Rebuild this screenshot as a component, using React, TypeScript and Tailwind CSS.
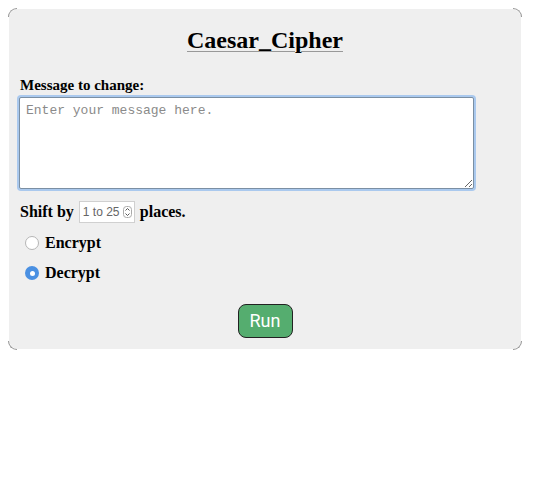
import React, { useState } from 'react';

const serif = { fontFamily: '"Liberation Serif", "Times New Roman", serif' };

function CornerMarks() {
  return (
    <>
      <span className="absolute -left-[1px] -top-[1px] h-[9px] w-[9px] rounded-tl-[9px] border-l border-t border-[#666] opacity-70" />
      <span className="absolute -right-[1px] -top-[1px] h-[9px] w-[9px] rounded-tr-[9px] border-r border-t border-[#666] opacity-70" />
      <span className="absolute -bottom-[1px] -left-[1px] h-[9px] w-[9px] rounded-bl-[9px] border-b border-l border-[#666] opacity-70" />
      <span className="absolute -bottom-[1px] -right-[1px] h-[9px] w-[9px] rounded-br-[9px] border-b border-r border-[#666] opacity-70" />
    </>
  );
}

export default function App() {
  const [mode, setMode] = useState('decrypt');
  const [msg, setMsg] = useState('');
  const [shift, setShift] = useState('');

  return (
    <div className="min-h-[490px] bg-white pl-[9px] pt-[9px]">
      <div className="relative w-[512px] rounded-[9px] bg-[#efefef] px-[11px] pb-[11px] pt-[15px]" style={serif}>
        <CornerMarks />
        <h1 className="text-center text-[24px] font-bold leading-[32px] text-black underline decoration-[#999] decoration-1 underline-offset-[3px]">
          Caesar_Cipher
        </h1>

        <label className="mt-[20px] block text-[15px] font-bold leading-[18px] text-black">Message to change:</label>
        <textarea
          value={msg}
          onChange={(e) => setMsg(e.target.value)}
          placeholder="Enter your message here."
          className="mt-[3px] ml-[-1px] block h-[92px] w-[455px] rounded-[2px] border border-[#7b8fa3] bg-white px-[6px] py-[5px] text-[13px] leading-[16px] text-black shadow-[0_0_0_2px_#aac9ee] outline-none placeholder:text-[#8a8a8a]"
          style={{ fontFamily: '"Liberation Mono", "Courier New", monospace' }}
        />

        <div className="mt-[12px] flex items-center text-[16px] font-bold leading-[22px] text-black">
          <span>Shift by</span>
          <div className="relative mx-[5px]">
            <input
              value={shift}
              onChange={(e) => setShift(e.target.value)}
              placeholder="1 to 25"
              className="block h-[22px] w-[56px] border border-[#d0d0d0] bg-white pl-[3px] pr-[14px] text-[12px] font-normal text-black outline-none placeholder:text-[#666]"
              style={{ fontFamily: '"Liberation Sans", Arial, sans-serif' }}
            />
            <svg className="absolute right-[3px] top-[5px]" width="9" height="12" viewBox="0 0 9 12">
              <rect x="0.5" y="0.5" width="8" height="11" rx="3" fill="#fff" stroke="#aaa" />
              <path d="M2.5 4.5 L4.5 2.5 L6.5 4.5" fill="none" stroke="#555" strokeWidth="1" />
              <path d="M2.5 7.5 L4.5 9.5 L6.5 7.5" fill="none" stroke="#555" strokeWidth="1" />
            </svg>
          </div>
          <span>places.</span>
        </div>

        <div className="mt-[11px] flex flex-col gap-[12px] pl-[5px] text-[16px] font-bold leading-[18px] text-black">
          {[
            ['encrypt', 'Encrypt'],
            ['decrypt', 'Decrypt']
          ].map(([key, text]) => (
            <label key={key} className="flex cursor-pointer items-center gap-[6px]" onClick={() => setMode(key)}>
              {mode === key ? (
                <span className="flex h-[14px] w-[14px] items-center justify-center rounded-full bg-[#4a90e2]">
                  <span className="h-[5px] w-[5px] rounded-full bg-white" />
                </span>
              ) : (
                <span className="h-[14px] w-[14px] rounded-full border border-[#b5b5b5] bg-white" />
              )}
              <span>{text}</span>
            </label>
          ))}
        </div>

        <div className="mt-[22px] flex justify-center">
          <button
            className="h-[34px] w-[55px] rounded-[8px] border border-[#222] bg-[#55ad6f] text-[18px] leading-none text-white"
            style={{ fontFamily: 'Roboto, "Liberation Sans", sans-serif' }}
          >
            Run
          </button>
        </div>
      </div>
    </div>
  );
}
